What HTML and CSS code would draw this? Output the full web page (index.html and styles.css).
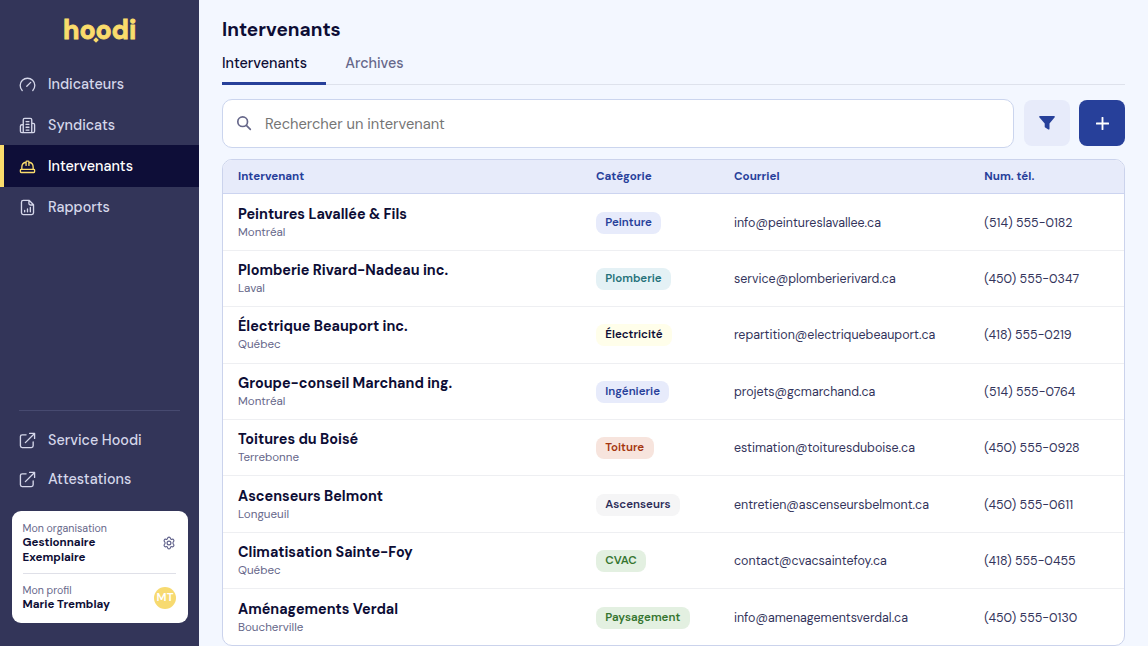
FILE: index.html
```html
<!DOCTYPE html>
<html lang="fr">
<head>
  <meta charset="UTF-8">
  <meta name="viewport" content="width=device-width, initial-scale=1.0">
  <title>Hoodi - Intervenants</title>
  <link rel="stylesheet" href="styles.css">
</head>
<body>

<aside class="sidebar">
  <div class="logo">hoodi</div>

  <nav class="menu">
    <a href="#">
      <svg viewBox="0 0 24 24"><path d="M4.500 20.500A10.300 10.300 0 1 1 19.500 20.500M11 14.500l5.500-5.500"/></svg>
      <span>Indicateurs</span>
    </a>
    <a href="#">
      <svg viewBox="0 0 24 24"><path d="M6 22V4a2 2 0 0 1 2-2h8a2 2 0 0 1 2 2v18M6 11H4a2 2 0 0 0-2 2v7a2 2 0 0 0 2 2h16a2 2 0 0 0 2-2v-9a2 2 0 0 0-2-2h-2M10 6.500h4M10 10.500h4M10 14.500h4M10 18.500h4"/></svg>
      <span>Syndicats</span>
    </a>
    <a href="#" class="active">
      <svg viewBox="0 0 24 24"><path d="M10 10.500V5.500a1 1 0 0 1 1-1h2a1 1 0 0 1 1 1v5M14 6a7 7 0 0 1 6 7v3M4 16v-3a7 7 0 0 1 6-7"/><rect x="2" y="16" width="20" height="4.500" rx="1"/></svg>
      <span>Intervenants</span>
    </a>
    <a href="#">
      <svg viewBox="0 0 24 24"><path d="M14.500 2H6a2.500 2.500 0 0 0-2.500 2.500v15A2.500 2.500 0 0 0 6 22h12a2.500 2.500 0 0 0 2.500-2.500V8zM14 2v4.500a2 2 0 0 0 2 2h4.500M8 18v-2M12 18v-4M16 18v-6"/></svg>
      <span>Rapports</span>
    </a>
  </nav>

  <div class="links">
    <a href="#">
      <svg viewBox="0 0 24 24"><path d="M10 4H4.500A2.500 2.500 0 0 0 2 6.500v13A2.500 2.500 0 0 0 4.500 22h13a2.500 2.500 0 0 0 2.500-2.500V14M15 2h7v7M22 2L9 15"/></svg>
      <span>Service Hoodi</span>
    </a>
    <a href="#">
      <svg viewBox="0 0 24 24"><path d="M10 4H4.500A2.500 2.500 0 0 0 2 6.500v13A2.500 2.500 0 0 0 4.500 22h13a2.500 2.500 0 0 0 2.500-2.500V14M15 2h7v7M22 2L9 15"/></svg>
      <span>Attestations</span>
    </a>
  </div>

  <div class="account">
    <div class="account-row org">
      <div>
        <small>Mon organisation</small>
        <strong>Gestionnaire<br>Exemplaire</strong>
      </div>
      <svg class="gear" viewBox="0 0 24 24"><path d="M9.600 3.900c.3-2.500 4.500-2.500 4.800 0 .2 1.500 1.500 2.200 2.900 1.700 2.300-.9 4.300 2.600 2.400 4.100-1.200 1-1.200 3.600 0 4.600 1.900 1.500-.1 5-2.400 4.100-1.400-.5-2.700.2-2.900 1.700-.3 2.500-4.500 2.500-4.800 0-.2-1.500-1.500-2.200-2.900-1.700-2.300.9-4.300-2.600-2.400-4.100 1.200-1 1.200-3.600 0-4.600-1.900-1.500.1-5 2.400-4.100 1.400.5 2.700-.2 2.900-1.700z"/><circle cx="12" cy="12" r="3.300"/></svg>
    </div>
    <div class="account-row profile">
      <div>
        <small>Mon profil</small>
        <strong>Marie Tremblay</strong>
      </div>
      <span class="avatar">MT</span>
    </div>
  </div>
</aside>

<main>
  <h1>Intervenants</h1>

  <div class="tabs">
    <a href="#" class="active">Intervenants</a>
    <a href="#">Archives</a>
  </div>

  <div class="toolbar">
    <label class="search">
      <svg viewBox="0 0 24 24"><circle cx="10" cy="10" r="7.300"/><path d="M15.500 15.500l6 6"/></svg>
      <input type="text" placeholder="Rechercher un intervenant">
    </label>
    <button class="filter" aria-label="Filtrer"><svg viewBox="0 0 16 14"><path d="M1 0h14a.8.8 0 0 1 .7 1.300L10.500 7.500v5.300a.8.8 0 0 1-1.200.7L6.200 11.500a1 1 0 0 1-.5-.8V7.500L.3 1.300A.8.8 0 0 1 1 0z"/></svg></button>
    <button class="add" aria-label="Ajouter"><svg viewBox="0 0 14 14"><path d="M7 .8v12.400M.8 7h12.400"/></svg></button>
  </div>

  <div class="table-wrap">
    <table>
      <colgroup><col class="c-name"><col class="c-cat"><col class="c-mail"><col></colgroup>
      <thead>
        <tr><th>Intervenant</th><th>Catégorie</th><th>Courriel</th><th>Num. tél.</th></tr>
      </thead>
      <tbody>
        <tr>
          <td><b>Peintures Lavallée &amp; Fils</b><small>Montréal</small></td>
          <td><span class="tag blue">Peinture</span></td>
          <td>info@peintureslavallee.ca</td>
          <td>(514) 555-0182</td>
        </tr>
        <tr>
          <td><b>Plomberie Rivard-Nadeau inc.</b><small>Laval</small></td>
          <td><span class="tag teal">Plomberie</span></td>
          <td>service@plomberierivard.ca</td>
          <td>(450) 555-0347</td>
        </tr>
        <tr>
          <td><b>Électrique Beauport inc.</b><small>Québec</small></td>
          <td><span class="tag yellow">Électricité</span></td>
          <td>repartition@electriquebeauport.ca</td>
          <td>(418) 555-0219</td>
        </tr>
        <tr>
          <td><b>Groupe-conseil Marchand ing.</b><small>Montréal</small></td>
          <td><span class="tag blue">Ingénierie</span></td>
          <td>projets@gcmarchand.ca</td>
          <td>(514) 555-0764</td>
        </tr>
        <tr>
          <td><b>Toitures du Boisé</b><small>Terrebonne</small></td>
          <td><span class="tag red">Toiture</span></td>
          <td>estimation@toituresduboise.ca</td>
          <td>(450) 555-0928</td>
        </tr>
        <tr>
          <td><b>Ascenseurs Belmont</b><small>Longueuil</small></td>
          <td><span class="tag grey">Ascenseurs</span></td>
          <td>entretien@ascenseursbelmont.ca</td>
          <td>(450) 555-0611</td>
        </tr>
        <tr>
          <td><b>Climatisation Sainte-Foy</b><small>Québec</small></td>
          <td><span class="tag green">CVAC</span></td>
          <td>contact@cvacsaintefoy.ca</td>
          <td>(418) 555-0455</td>
        </tr>
        <tr>
          <td><b>Aménagements Verdal</b><small>Boucherville</small></td>
          <td><span class="tag green">Paysagement</span></td>
          <td>info@amenagementsverdal.ca</td>
          <td>(450) 555-0130</td>
        </tr>
      </tbody>
    </table>
  </div>
</main>

</body>
</html>
```
FILE: styles.css
```css
* {
  box-sizing: border-box;
}
body {
  margin: 0;
  height: 646px;
  display: flex;
  overflow: hidden;
  background: #f3f7ff;
  color: #0d0d35;
  font-family: "DM Sans", Inter, sans-serif;
}
a {
  color: inherit;
  text-decoration: none;
}
svg {
  display: block;
  flex: none;
  fill: none;
  stroke: currentColor;
  stroke-width: 2;
  stroke-linecap: round;
  stroke-linejoin: round;
}
small {
  display: block;
  color: #66678a;
}

/* sidebar */
.sidebar {
  width: 199px;
  flex: none;
  display: flex;
  flex-direction: column;
  background: #333559;
  color: #d5d7ea;
}
.logo {
  position: relative;
  height: 63px;
  padding: 13px 0 0 63px;
  color: #fadc6c;
  font-size: 26.5px;
  line-height: 34px;
  font-weight: 800;
  letter-spacing: -0.1px;
  -webkit-text-stroke: 0.8px #fadc6c;
}
.logo::after {
  content: "";
  position: absolute;
  left: 94px;
  top: 37.5px;
  width: 4px;
  height: 4px;
  background: #fadc6c;
  transform: rotate(45deg);
}
.menu a, .links a {
  display: flex;
  align-items: center;
  gap: 12px;
  height: 41.2px;
  padding-left: 19px;
  font-size: 14.35px;
  font-weight: 500;
}
.menu svg, .links svg {
  width: 17px;
  height: 17px;
  stroke-width: 1.9;
  margin-top: 1px;
}
.menu .active {
  padding-left: 15px;
  border-left: 4px solid #fadc6c;
  background: #0e0e38;
  color: #fff;
}
.menu .active svg {
  color: #fadc6c;
}
.links {
  margin-top: auto;
  padding-bottom: 12px;
}
.links::before {
  content: "";
  display: block;
  margin: 0 19px 9px;
  border-top: 1px solid #474a70;
}
.links a {
  height: 39.3px;
}
.account {
  width: 176px;
  height: 112px;
  margin: 0 0 23px 11.5px;
  padding: 11px 11.5px 0 11px;
  border-radius: 9px;
  background: #fff;
  color: #0d0d35;
}
.account small {
  font-size: 10.6px;
  line-height: 14px;
}
.account strong {
  display: block;
  padding-top: 1px;
  font-size: 11.55px;
  line-height: 14.3px;
}
.account-row {
  display: flex;
  align-items: center;
  justify-content: space-between;
}
.org {
  height: 52px;
  padding-bottom: 9px;
  border-bottom: 1px solid #dfe0e8;
}
.profile {
  height: 47px;
}
.gear {
  width: 14px;
  height: 14px;
  color: #5f608a;
}
.avatar {
  width: 22px;
  height: 22px;
  margin-top: 1px;
  border-radius: 50%;
  background: #f7da70;
  color: #fff;
  font-size: 11.5px;
  font-weight: 600;
  line-height: 21px;
  text-align: center;
}

/* page */
main {
  flex: 1;
  padding: 17px 23px 0;
}
h1 {
  margin: 0;
  font-size: 19px;
  line-height: 26px;
  font-weight: 700;
}
.tabs {
  display: flex;
  height: 42px;
  border-bottom: 1px solid #dee2ec;
  color: #66678a;
  font-size: 14.35px;
  font-weight: 500;
  line-height: 40px;
}
.tabs a {
  height: 42px;
  margin-right: 19.2px;
}
.tabs .active {
  width: 104px;
  border-bottom: 3px solid #27409a;
  color: #0d0d35;
}
.toolbar {
  display: flex;
  align-items: center;
  gap: 9.5px;
  margin: 13.5px 0 11px;
}
.search {
  flex: 1;
  display: flex;
  align-items: center;
  gap: 13px;
  height: 49.5px;
  padding-left: 13px;
  border: 1px solid #cbd5ee;
  border-radius: 10px;
  background: #fff;
}
.search svg {
  width: 16px;
  height: 16px;
  color: #66678a;
  stroke-width: 2.5;
}
.search input {
  flex: 1;
  border: none;
  outline: none;
  padding: 1px 0 0;
  background: none;
  font: 400 14.7px "DM Sans", Inter, sans-serif;
}
.search input::placeholder {
  color: #757575;
}
button {
  display: flex;
  align-items: center;
  justify-content: center;
  width: 46px;
  height: 46px;
  padding: 0;
  border: none;
  border-radius: 8px;
}
.filter {
  background: #e7ebfa;
  color: #27409a;
}
.filter svg {
  width: 16px;
  height: 14px;
  fill: currentColor;
  stroke: none;
}
.add {
  background: #27409a;
  color: #fff;
}
.add svg {
  width: 13px;
  height: 13px;
}

/* table */
.table-wrap {
  height: 487px;
  overflow: hidden;
  border: 1px solid #cbd3ec;
  border-radius: 10px;
  background: #fff;
}
table {
  width: 100%;
  table-layout: fixed;
  border-collapse: separate;
  border-spacing: 0;
}
.c-name {
  width: 358px;
}
.c-cat {
  width: 138px;
}
.c-mail {
  width: 250.3px;
}
th, td {
  padding: 0 0 0 15px;
  text-align: left;
  white-space: nowrap;
}
th {
  height: 34.4px;
  padding-bottom: 1.5px;
  border-bottom: 1px solid #ccd4f0;
  background: #e7ebfa;
  color: #27409a;
  font-size: 11.6px;
  font-weight: 700;
}
td {
  height: 56.4px;
  padding-top: 1px;
  border-bottom: 1px solid #eeeff2;
  color: #33345b;
  font-size: 12.45px;
}
tr:last-child td {
  border-bottom: none;
}
td b {
  display: block;
  color: #0d0d35;
  font-size: 14.37px;
  line-height: 19px;
}
td small {
  font-size: 11.6px;
  line-height: 17px;
}
.tag {
  display: inline-block;
  padding: 0 9.3px;
  border-radius: 8px;
  font-size: 11.55px;
  font-weight: 600;
  line-height: 22px;
}
.blue {
  background: #e7ebfb;
  color: #27409a;
}
.teal {
  background: #e4f1f5;
  color: #25717a;
}
.yellow {
  background: #fffeea;
  color: #0d0d35;
}
.red {
  background: #f7e4dd;
  color: #a5360f;
}
.grey {
  background: #f5f5f6;
  color: #2b2c58;
}
.green {
  background: #e3f0e1;
  color: #35752f;
}
```
